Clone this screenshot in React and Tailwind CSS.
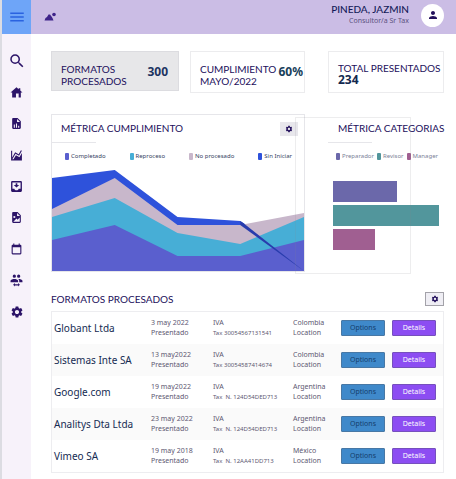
import React from "react";
import { MdMenu, MdSearch, MdSettings, MdPerson } from "react-icons/md";

const icons = {
  Inicio: "M12 2.500L1 12h3v9h7v-7h5v7h4v-9h3l-4-3.500V4h-3v2z",
  Reportes:
    "M13,9H18.5L13,3.5V9M6,2H14L20,8V20A2,2 0 0,1 18,22H6C4.89,22 4,21.1 4,20V4C4,2.89 4.89,2 6,2M7,20H9V14H7V20M11,20H13V12H11V20M15,20H17V16H15V20Z",
  Gráficos:
    "M17.45,15.18L22,7.31V21H2V3H4V15.54L9.5,6L16,9.78L20.24,2.45L21.97,3.45L16.74,12.5L10.23,8.75L4.31,19H6.57L10.96,11.44L17.45,15.18Z",
  Bandeja:
    "M4 2h16a2 2 0 0 1 2 2v16a2 2 0 0 1-2 2H4a2 2 0 0 1-2-2V4a2 2 0 0 1 2-2zM4.500 4.500V16H8c.5 2 2 3 4 3s3.500-1 4-3h3.500V4.500zM10.500 6h3v3H17l-5 5-5-5h3.500z",
  Imágenes:
    "M13,9H18.5L13,3.5V9M6,2H14L20,8V20A2,2 0 0,1 18,22H6C4.89,22 4,21.1 4,20V4C4,2.89 4.89,2 6,2M6,20H18V12L14,16L12,14L6,20M8,9A2,2 0 0,0 6,11A2,2 0 0,0 8,13A2,2 0 0,0 10,11A2,2 0 0,0 8,9Z",
  Calendario:
    "M19,3H18V1H16V3H8V1H6V3H5C3.89,3 3,3.89 3,5V19A2,2 0 0,0 5,21H19A2,2 0 0,0 21,19V5A2,2 0 0,0 19,3M19,19H5V8H19V19Z",
  Equipo:
    "M16,9C18.33,9 23,10.17 23,12.5V15H17V12.5C17,11 16.19,9.89 15.04,9.05L16,9M8,9C10.33,9 15,10.17 15,12.5V15H1V12.5C1,10.17 5.67,9 8,9M8,7A3,3 0 0,1 5,4A3,3 0 0,1 8,1A3,3 0 0,1 11,4A3,3 0 0,1 8,7M16,7A3,3 0 0,1 13,4A3,3 0 0,1 16,1A3,3 0 0,1 19,4A3,3 0 0,1 16,7M9,16.75V19H15V16.75L18.25,20L15,23.25V21H9V23.25L5.75,20L9,16.75Z",
};

const rows = [
  ["Globant Ltda", "3 may 2022", "Tax 30054567131541", "Colombia"],
  ["Sistemas Inte SA", "13 may2022", "Tax 30054587414674", "Colombia"],
  ["Google.com", "19 may2022", "Tax  N. 124D54DED713", "Argentina"],
  ["Analitys Dta Ltda", "23 may 2022", "Tax  N. 124D54DED713", "Argentina"],
  ["Vimeo SA", "19 may 2018", "Tax  N. 12AA41DD713", "México"],
];

function NavButton({ label, children }) {
  return (
    <button aria-label={label} className="flex flex-1 items-center justify-center">
      {children}
    </button>
  );
}

function Sidebar() {
  return (
    <aside className="flex w-[31px] shrink-0 flex-col border-l-2 border-[#dcdce2] bg-[#f7f2fa] text-[#2c1468]">
      <button aria-label="Menú" className="flex h-[34px] items-center justify-center bg-[#6ea5f8] text-[#2a63e0]">
        <MdMenu size={18} />
      </button>
      <nav className="mt-[11px] flex h-[283px] flex-col">
        <NavButton label="Buscar">
          <MdSearch size={18} />
        </NavButton>
        {Object.entries(icons).map(([label, d]) => (
          <NavButton key={label} label={label}>
            <svg viewBox="0 0 24 24" className="size-[13px]" fill="currentColor" fillRule="evenodd">
              <path d={d} />
            </svg>
          </NavButton>
        ))}
        <NavButton label="Ajustes">
          <MdSettings size={14} />
        </NavButton>
      </nav>
    </aside>
  );
}

function Legend({ color, children }) {
  return (
    <li className="flex items-center gap-0.5">
      <span className={"h-[7px] w-1 rounded-[1px] " + color} />
      {children}
    </li>
  );
}

function AreaChart() {
  return (
    <svg viewBox="0 0 253 101" preserveAspectRatio="none" className="block h-[101px] w-full" role="img" aria-label="Métrica cumplimiento">
      <polygon fill="#2e52db" points="0,8 63,0 126,47 189,51 195,55 189,101 0,101" />
      <polygon fill="#c8b7cb" points="0,39 63,8 126,55 189,55 253,43 253,101 0,101" />
      <polygon fill="#47aed6" points="0,47 63,28 126,63 189,74 253,47 253,101 0,101" />
      <polygon fill="#5a5fce" points="0,70 63,55 126,86 189,86 253,70 253,101 0,101" />
      <polygon fill="#283cad" points="189,51 192,53 253,101 189,55" />
    </svg>
  );
}

function Details() {
  return (
    <table className="w-full table-fixed border-collapse text-left font-['Noto_Sans',sans-serif] text-[7px] leading-[10px] text-[#5d5871]">
      <colgroup>
        <col />
        <col className="w-[62px]" />
        <col className="w-20" />
        <col className="w-12" />
        <col className="w-[102px]" />
      </colgroup>
      <tbody>
        {rows.map(([name, date, tax, place]) => (
          <tr key={name} className="h-8 even:bg-[#fafafa]">
            <th scope="row" className="pl-0.5 text-[10px] font-normal whitespace-nowrap text-[#152b52]">{name}</th>
            <td>
              {date}
              <br />
              Presentado
            </td>
            <td className="whitespace-pre text-[6px]">
              <span className="text-[7px]">IVA</span>
              <br />
              {tax}
            </td>
            <td>
              {place}
              <br />
              Location
            </td>
            <td>
              <div className="flex justify-between pr-[7px]">
                <button className="h-4 w-11 rounded-[1px] border border-[#4878a5] bg-[#3f89ca] text-[#153f6d]">Options</button>
                <button className="h-4 w-11 rounded-[1px] border border-[#7650bd] bg-[#8c4df2] text-white">Details</button>
              </div>
            </td>
          </tr>
        ))}
      </tbody>
    </table>
  );
}

export default function App() {
  return (
    <div className="flex min-h-screen bg-white font-[Lato,sans-serif] text-[#23105c]">
      <Sidebar />
      <div className="min-w-0 flex-1">
        <header className="flex h-[34px] items-center bg-[#cbbde5] pr-3 pb-1 pl-[13px]">
          <svg viewBox="0 0 12 9" className="mt-0.5 h-[9px] w-3" fill="#3f248a" aria-hidden="true">
            <path d="M0.500 8.500L1.500 6 3 5 4.500 2.500 6 2.500 7.500 4.500 8.500 6 9.500 8.500z" />
            <circle cx="10" cy="2.500" r="1.800" />
          </svg>
          <div className="mr-3 ml-auto text-right">
            <div className="text-[10px] leading-3 font-medium text-[#141a58]">PINEDA, JAZMIN</div>
            <div className="font-['Noto_Sans',sans-serif] text-[7px] leading-3 text-[#5c527f]">Consultor/a Sr Tax</div>
          </div>
          <button aria-label="Perfil" className="flex size-[23px] items-center justify-center rounded-full bg-white">
            <MdPerson size={12} />
          </button>
        </header>

        <main className="pt-[17px] pr-3 pl-5">
          <section className="grid grid-cols-[128fr_11fr_115fr_23fr_116fr] items-start text-[10px] leading-3 *:min-w-0">
            <div className="flex h-10 justify-between border border-[#dcdce0] bg-[#e7e7e9] pt-[11px] pr-2.5 pl-[9px]">
              <h2>
                FORMATOS
                <br />
                PROCESADOS
              </h2>
              <strong className="pt-[3px] font-['Noto_Sans',sans-serif] text-[12px] leading-3 text-[#1c3361]">300</strong>
            </div>
            <div className="col-start-3 flex h-[42px] justify-between border border-[#ececee] pt-[11px] pr-px pl-[9px]">
              <h2>
                CUMPLIMIENTO
                <br />
                MAYO/2022
              </h2>
              <strong className="pt-[3px] font-['Noto_Sans',sans-serif] text-[12px] leading-3 text-[#17405a]">60%</strong>
            </div>
            <div className="col-start-5 h-[42px] border border-[#ececee] pt-2.5 pl-[9px]">
              <h2 className="whitespace-nowrap">TOTAL PRESENTADOS</h2>
              <strong className="block font-['Noto_Sans',sans-serif] text-[12px] leading-3 text-[#13294f]">234</strong>
            </div>
          </section>

          <section className="mt-[21px] grid grid-cols-[254fr_139fr] *:min-w-0">
            <article className="h-[158px] border border-[#e6e6ea]">
              <div className="flex h-[27px] items-center justify-between pr-1.5 pl-[9px]">
                <h2 className="text-[10px]">MÉTRICA CUMPLIMIENTO</h2>
                <button aria-label="Configurar métrica" className="flex h-3.5 w-[18px] items-center justify-center bg-[#e8e7ec]">
                  <MdSettings size={8} />
                </button>
              </div>
              <hr className="w-11 border-[#e6e6ea]" />
              <ul className="mt-1.5 mb-[7px] flex h-[14px] items-center justify-between pr-3 pl-[13px] font-['Noto_Sans',sans-serif] text-[6px] text-[#344062]">
                <Legend color="bg-[#5a5fce]">Completado</Legend>
                <Legend color="bg-[#47aed6]">Reproceso</Legend>
                <Legend color="bg-[#c8b7cb]">No procesado</Legend>
                <Legend color="bg-[#2e52db]">Sin Iniciar</Legend>
              </ul>
              <AreaChart />
            </article>

            <article className="relative h-[158px] pt-px pl-[23px]">
              <div className="pointer-events-none absolute top-[3px] right-[33px] bottom-[-2px] left-[-10px] border border-[#88888c]/15" />
              <h2 className="flex h-[27px] items-center pl-2.5 text-[10px] whitespace-nowrap">MÉTRICA CATEGORIAS</h2>
              <hr className="w-11 border-[#e6e6ea]" />
              <ul className="mt-1.5 flex h-[14px] items-center justify-between pr-1.5 pl-2 font-['Noto_Sans',sans-serif] text-[6px] whitespace-nowrap text-[#7b8198]">
                <Legend color="bg-[#6b68aa]">Preparador</Legend>
                <Legend color="bg-[#52969c]">Revisor</Legend>
                <Legend color="bg-[#a05f91]">Manager</Legend>
              </ul>
              <div className="mt-[18px] mr-[5px] ml-[5px] flex flex-col gap-[3px]">
                <div className="h-[21px] w-3/5 bg-[#6b68aa]" />
                <div className="h-[21px] w-full bg-[#52969c]" />
                <div className="h-[21px] w-2/5 bg-[#a05f91]" />
              </div>
            </article>
          </section>

          <section className="mt-5">
            <div className="flex h-[14px] items-center justify-between">
              <h2 className="text-[10px]">FORMATOS PROCESADOS</h2>
              <button aria-label="Configurar formatos" className="flex h-3.5 w-[19px] items-center justify-center border border-[#a3a2a9] bg-[#efeef4]">
                <MdSettings size={8} />
              </button>
            </div>
            <div className="mt-[5px] border border-[#ededf0]">
              <Details />
            </div>
          </section>
        </main>
      </div>
    </div>
  );
}
